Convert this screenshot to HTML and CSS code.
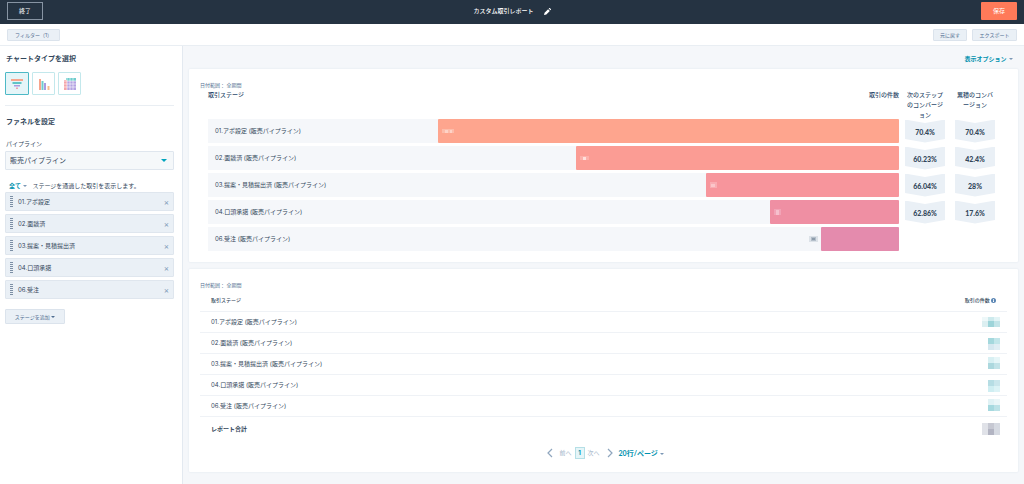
FILE: index.html
```html
<!DOCTYPE html>
<html lang="ja">
<head>
  <meta charset="UTF-8">
  <meta name="viewport" content="width=device-width, initial-scale=1.0">
  <title>カスタム取引レポート</title>
  <link rel="stylesheet" href="styles.css">
</head>
<body>
  <header class="topbar">
    <button class="btn-exit" type="button">終了</button>
    <div class="report-title">
      <h1>カスタム取引レポート</h1>
      <svg width="7" height="7" viewBox="0 0 12 12"><path d="M0 12l1-4 6-6 3 3-6 6zM8 1l1-1h1l2 2v1l-1 1z" fill="#fff"/></svg>
    </div>
    <button class="btn-save" type="button">保存</button>
  </header>

  <div class="toolbar">
    <button class="chip chip-filter" type="button">フィルター（1）</button>
    <div class="toolbar-right">
      <button class="chip chip-undo" type="button">元に戻す</button>
      <button class="chip chip-export" type="button">エクスポート</button>
    </div>
  </div>

  <div class="layout">
    <aside class="sidebar">
      <h2>チャートタイプを選択</h2>
      <div class="chart-types">
        <button class="chart-type active" type="button" aria-label="ファネル">
          <svg width="12" height="12" viewBox="0 0 12 12">
            <path d="M0 1h12v2H0z" fill="#f8a48c"/>
            <path d="M1.500 4h9v2h-9z" fill="#5fc4c6"/>
            <path d="M3 7h6v1.500H3z" fill="#a99be0"/>
            <path d="M5 9.500h2v1.500H5z" fill="#f2a0b0"/>
          </svg>
        </button>
        <button class="chart-type" type="button" aria-label="棒グラフ">
          <svg width="12" height="12" viewBox="0 0 12 12">
            <path d="M1 1h2v11H1z" fill="#f8a48c"/>
            <path d="M3.500 3h2v9h-2z" fill="#6fcdcd"/>
            <path d="M6 5h2v7H6z" fill="#a99be0"/>
            <path d="M9.500 8h2v4h-2z" fill="#f7bd8a"/>
          </svg>
        </button>
        <button class="chart-type" type="button" aria-label="表">
          <svg width="12" height="12" viewBox="0 0 12 12">
            <path d="M2 0h10v3H2z" fill="#6fcdcd"/>
            <path d="M0 2h3v10H0z" fill="#f5a4a8"/>
            <path d="M3 3h9v9H3z" fill="#b4a2e2"/>
            <path d="M3 0v12M6 0v12M9 0v12M0 3h12M0 6h12M0 9h12" stroke="#fff" stroke-width=".6"/>
          </svg>
        </button>
      </div>
      <hr>
      <h2>ファネルを設定</h2>
      <label for="pipeline">パイプライン</label>
      <div class="select-wrap">
        <select id="pipeline">
          <option>販売パイプライン</option>
        </select>
      </div>
      <p class="stage-rule"><a href="#">全て <span class="caret"></span></a>ステージを通過した取引を表示します。</p>
      <ul class="stages">
        <li><span class="grip"></span>01.アポ設定<button type="button" aria-label="削除">×</button></li>
        <li><span class="grip"></span>02.面談済<button type="button" aria-label="削除">×</button></li>
        <li><span class="grip"></span>03.提案・見積提出済<button type="button" aria-label="削除">×</button></li>
        <li><span class="grip"></span>04.口頭承諾<button type="button" aria-label="削除">×</button></li>
        <li><span class="grip"></span>06.受注<button type="button" aria-label="削除">×</button></li>
      </ul>
      <button class="chip chip-add" type="button">ステージを追加 <span class="caret"></span></button>
    </aside>

    <main>
      <div class="options"><a href="#">表示オプション <span class="caret"></span></a></div>

      <section class="card chart-card">
        <p class="date-range">日付範囲： 全期間</p>
        <div class="funnel">
          <div class="funnel-row funnel-head">
            <div class="head-main"><span>取引ステージ</span><span>取引の件数</span></div>
            <div class="head-rate">次のステップ<br>のコンバージ<br>ョン</div>
            <div class="head-rate">累積のコンバ<br>ージョン</div>
          </div>
          <div class="funnel-row">
            <div class="track">
              <span>01.アポ設定 (販売パイプライン)</span>
              <div class="bar bar-1" style="width: 66.7%">
                <svg width="12" height="6"><path d="M0 1h12v4H0z" fill="#fdbcaa"/><path d="M3 2h3v3H3zM8 2h2v3H8z" fill="#fed3c7"/></svg>
              </div>
            </div>
            <div class="rate">70.4%</div>
            <div class="rate">70.4%</div>
          </div>
          <div class="funnel-row">
            <div class="track">
              <span>02.面談済 (販売パイプライン)</span>
              <div class="bar bar-2" style="width: 46.7%">
                <svg width="9" height="6"><path d="M0 1h9v4H0z" fill="#fcb0aa"/><path d="M3 2h3v3H3z" fill="#fee0dc"/></svg>
              </div>
            </div>
            <div class="rate">60.23%</div>
            <div class="rate">42.4%</div>
          </div>
          <div class="funnel-row">
            <div class="track">
              <span>03.提案・見積提出済 (販売パイプライン)</span>
              <div class="bar bar-3" style="width: 28%">
                <svg width="7" height="6"><path d="M0 0h7v6H0z" fill="#f9acb2"/><path d="M1 2h4v3H1z" fill="#fbc6ca"/></svg>
              </div>
            </div>
            <div class="rate">66.04%</div>
            <div class="rate">28%</div>
          </div>
          <div class="funnel-row">
            <div class="track">
              <span>04.口頭承諾 (販売パイプライン)</span>
              <div class="bar bar-4" style="width: 18.7%">
                <svg width="7" height="6"><path d="M0 0h7v6H0z" fill="#f2a3b6"/><path d="M2 1h3v5H2z" fill="#f6c0cd"/></svg>
              </div>
            </div>
            <div class="rate">62.86%</div>
            <div class="rate">17.6%</div>
          </div>
          <div class="funnel-row">
            <div class="track">
              <span>06.受注 (販売パイプライン)</span>
              <div class="bar bar-5" style="width: 11.3%">
                <svg class="outside" width="9" height="6"><path d="M0 0h9v6H0z" fill="#dce2e8"/><path d="M2 1h5v4H2z" fill="#b4bfca"/><path d="M3 2h3v2H3z" fill="#8d9cab"/></svg>
              </div>
            </div>
          </div>
        </div>
      </section>

      <section class="card table-card">
        <p class="date-range">日付範囲： 全期間</p>
        <table>
          <thead>
            <tr>
              <th>取引ステージ</th>
              <th class="num">取引の件数 <svg width="5" height="5" viewBox="0 0 10 10"><circle cx="5" cy="5" r="5" fill="#5b86b4"/><path d="M4 2h2v1.500H4zM4 4.500h2V8H4z" fill="#fff"/></svg></th>
            </tr>
          </thead>
          <tbody>
            <tr>
              <td>01.アポ設定 (販売パイプライン)</td>
              <td class="num"><svg width="18" height="18"><path d="M0 4h6v4H0z" fill="#eef8f9"/><path d="M6 4h6v4H6z" fill="#cdeaed"/><path d="M12 4h6v4h-6z" fill="#e2f4f6"/><path d="M0 8h6v6H0z" fill="#dceff1"/><path d="M6 8h6v6H6z" fill="#9dd4d9"/><path d="M12 8h6v6h-6z" fill="#c2e4e8"/></svg></td>
            </tr>
            <tr>
              <td>02.面談済 (販売パイプライン)</td>
              <td class="num"><svg width="12" height="18"><path d="M0 4h6v6H0z" fill="#a4d8dd"/><path d="M6 4h6v6H6z" fill="#c2e6ea"/><path d="M0 10h6v6H0z" fill="#d6e8f0"/><path d="M6 10h6v6H6z" fill="#e0eef4"/></svg></td>
            </tr>
            <tr>
              <td>03.提案・見積提出済 (販売パイプライン)</td>
              <td class="num"><svg width="12" height="18"><path d="M0 2h6v6H0z" fill="#d8f0f3"/><path d="M6 2h6v6H6z" fill="#e6f6f8"/><path d="M0 8h6v6H0z" fill="#acd8de"/><path d="M6 8h6v6H6z" fill="#c2e3e8"/></svg></td>
            </tr>
            <tr>
              <td>04.口頭承諾 (販売パイプライン)</td>
              <td class="num"><svg width="12" height="18"><path d="M0 4h6v6H0z" fill="#b6dde4"/><path d="M6 4h6v6H6z" fill="#cae6ec"/><path d="M0 10h6v6H0z" fill="#cfeef2"/><path d="M6 10h6v6H6z" fill="#dcf3f6"/></svg></td>
            </tr>
            <tr>
              <td>06.受注 (販売パイプライン)</td>
              <td class="num"><svg width="12" height="18"><path d="M0 2h6v6H0z" fill="#e0f2f5"/><path d="M6 2h6v6H6z" fill="#eaf6f8"/><path d="M0 8h6v6H0z" fill="#a6d9df"/><path d="M6 8h6v6H6z" fill="#bce2e7"/></svg></td>
            </tr>
          </tbody>
          <tfoot>
            <tr>
              <td>レポート合計</td>
              <td class="num"><svg width="18" height="18"><path d="M0 3h6v12H0z" fill="#e0e2e8"/><path d="M6 3h6v6H6z" fill="#c6c8d2"/><path d="M12 3h6v12h-6z" fill="#d6dae2"/><path d="M6 9h6v6H6z" fill="#b2b4c2"/></svg></td>
            </tr>
          </tfoot>
        </table>
        <nav class="pagination">
          <a class="page-step" href="#"><svg width="6" height="10" viewBox="0 0 6 10"><path d="M5 1L1 5l4 4" fill="none" stroke="#8fa6be" stroke-width="1.200"/></svg>前へ</a>
          <a class="page-current" href="#">1</a>
          <a class="page-step" href="#">次へ<svg width="6" height="10" viewBox="0 0 6 10"><path d="M1 1l4 4-4 4" fill="none" stroke="#8fa6be" stroke-width="1.200"/></svg></a>
          <a class="page-size" href="#">20行/ページ <span class="caret"></span></a>
        </nav>
      </section>
    </main>
  </div>
</body>
</html>
```
FILE: styles.css
```css
* {
  box-sizing: border-box;
}
body {
  margin: 0;
  font-family: Inter, "Noto Sans CJK JP", sans-serif;
  font-size: 6px;
  line-height: 10px;
  color: #33475b;
  background-color: #f5f7fa;
  min-height: 100vh;
  display: flex;
  flex-direction: column;
}
h1, h2, p, ul {
  margin: 0;
  padding: 0;
}
button, select {
  font: inherit;
  cursor: pointer;
}
a {
  text-decoration: none;
  color: #0091ae;
}
.caret {
  display: inline-block;
  margin-left: 1px;
  border: 2px solid transparent;
  border-top-color: #7c98b6;
  border-bottom: 0;
  vertical-align: middle;
}

/* header */
.topbar {
  display: flex;
  align-items: center;
  justify-content: space-between;
  height: 24px;
  padding: 0 7px 2px;
  background-color: #253342;
  color: #fff;
}
.topbar button {
  width: 36px;
  height: 18px;
  padding: 0;
  color: #fff;
}
.btn-exit {
  background: none;
  border: 1px solid #8794a3;
}
.topbar .btn-save {
  background-color: #ff7a59;
  border: 0;
  border-radius: 1px;
}
.report-title {
  display: flex;
  align-items: center;
  gap: 10px;
}
.report-title h1 {
  font-size: 6px;
  font-weight: 500;
}
.toolbar {
  display: flex;
  align-items: center;
  justify-content: space-between;
  height: 22px;
  padding: 0 7px;
  background-color: #fff;
  border-bottom: 1px solid #e9eef3;
}
.toolbar-right {
  display: flex;
  gap: 5px;
}
.chip {
  height: 12px;
  padding: 0;
  font-size: 5px;
  color: #506e91;
  background-color: #eaf0f6;
  border: 1px solid #dbe3ec;
  border-radius: 1px;
}
.chip-filter {
  width: 53px;
}
.chip-undo {
  width: 34px;
}
.chip-export {
  width: 45px;
}

/* sidebar */
.layout {
  display: flex;
  flex: 1;
}
.sidebar {
  flex: none;
  width: 183px;
  padding: 8px 8px 8px 5px;
  background-color: #fff;
  border-right: 1px solid #e3e9f0;
}
.sidebar h2 {
  padding-left: 1px;
  font-size: 7px;
  font-weight: 700;
}
.chart-types {
  display: flex;
  gap: 3px;
  margin-top: 8px;
}
.chart-type {
  display: flex;
  align-items: center;
  justify-content: center;
  width: 23px;
  height: 23px;
  padding: 0;
  background-color: #fff;
  border: 1px solid #c3e8ec;
  border-radius: 1px;
}
.chart-type.active {
  width: 24px;
  background-color: #e5f5f8;
  border-color: #4db9c6;
}
.sidebar hr {
  height: 1px;
  margin: 10px 0 11px;
  border: 0;
  background-color: #e9eef3;
}
.sidebar label {
  display: block;
  margin: 12px 0 2px;
  padding-left: 1px;
}
.select-wrap {
  position: relative;
}
.select-wrap::after {
  content: "";
  position: absolute;
  top: 8px;
  right: 7px;
  border: 3px solid transparent;
  border-top-color: #00a4bd;
  border-bottom: 0;
}
.select-wrap select {
  width: 100%;
  height: 19px;
  padding: 0 4px;
  font-size: 7px;
  color: #33475b;
  background-color: #f5f8fa;
  border: 1px solid #dfe6ee;
  border-radius: 1px;
  appearance: none;
}
.stage-rule {
  padding: 11px 0 1px 4px;
}
.stage-rule a {
  margin-right: 5px;
  font-weight: 700;
}
.stages {
  display: flex;
  flex-direction: column;
  gap: 3px;
  list-style: none;
}
.stages li {
  display: flex;
  align-items: center;
  height: 19px;
  padding: 0 4px;
  background-color: #eaf0f6;
  border: 1px solid #dfe6ee;
  border-radius: 1px;
}
.grip {
  width: 3px;
  height: 11px;
  margin-right: 5px;
  background: repeating-linear-gradient(#7c8fa5 0 1px, transparent 1px 2px);
}
.stages button {
  margin-left: auto;
  padding: 0;
  font-size: 8px;
  color: #7c98b6;
  background: none;
  border: 0;
}
.chip-add {
  width: 60px;
  height: 15px;
  margin-top: 10px;
}
.chip-add .caret {
  margin-left: 0;
  border-top-color: #506e91;
}

/* report */
main {
  flex: 1;
  min-width: 0;
  padding: 8px 6px 0;
}
.options {
  margin-right: 5px;
  text-align: right;
  font-weight: 700;
}
.card {
  background-color: #fff;
  border-radius: 1px;
  box-shadow: 0 0 2px #dbe2ea;
}
.date-range {
  font-size: 5px;
  color: #516f90;
}
.chart-card {
  margin-top: 5px;
  padding: 11px 23px 11px 11px;
}
.funnel {
  display: flex;
  flex-direction: column;
  gap: 3px;
  padding-left: 8px;
}
.funnel-row {
  display: grid;
  grid-template-columns: 1fr 46px 50px;
  align-items: center;
}
.funnel-head {
  align-items: start;
  height: 26px;
  color: #2d4a6b;
  font-weight: 500;
}
.head-main {
  display: flex;
  justify-content: space-between;
}
.head-rate, .rate {
  justify-self: end;
  width: 40px;
  text-align: center;
}
.track {
  display: flex;
  align-items: center;
  height: 24px;
  padding-left: 7px;
  background-color: #f5f7fa;
  position: relative;
}
.bar {
  position: absolute;
  right: 0;
  height: 24px;
  display: flex;
  align-items: center;
  padding-left: 4px;
  border-radius: 1px;
}
.bar-1 {
  background-color: #fea58e;
}
.bar-2 {
  background-color: #fb9c94;
}
.bar-3 {
  background-color: #f7959c;
}
.bar-4 {
  background-color: #ef8fa3;
}
.bar-5 {
  background-color: #e48bad;
}
.outside {
  position: absolute;
  right: 100%;
  margin-right: 3px;
}
.rate {
  height: 23px;
  font-family: Lato, sans-serif;
  font-size: 7px;
  font-weight: 900;
  line-height: 24px;
  background-color: #eaf0f6;
  clip-path: polygon(0 0, 50% 15%, 100% 0, 100% 85%, 50% 100%, 0 85%);
}

/* summary table */
.table-card {
  margin-top: 7px;
  padding: 11px 11px 13px;
}
table {
  width: 100%;
  border-collapse: collapse;
}
th, td {
  height: 21px;
  padding: 0 11px;
  text-align: left;
  border-bottom: 1px solid #eff2f6;
}
th {
  font-size: 5px;
  font-weight: 500;
}
.num {
  text-align: right;
}
td.num {
  padding-right: 7px;
}
td svg {
  display: block;
  margin-left: auto;
}
th svg {
  vertical-align: middle;
}
tfoot td {
  height: 26px;
  font-weight: 700;
  border-bottom: 0;
}
.pagination {
  display: flex;
  align-items: center;
  justify-content: center;
  margin-top: 5px;
  padding-left: 4px;
}
.page-step {
  display: flex;
  align-items: center;
  gap: 7px;
  color: #a3b5c9;
}
.page-current {
  width: 10px;
  margin: 0 3px;
  font-weight: 700;
  text-align: center;
  background-color: #e5f5f8;
  border: 1px solid #b5dfe6;
}
.page-size {
  margin-left: 6px;
  font-family: Lato, "Noto Sans CJK JP", sans-serif;
  font-size: 7px;
  font-weight: 700;
}
```
